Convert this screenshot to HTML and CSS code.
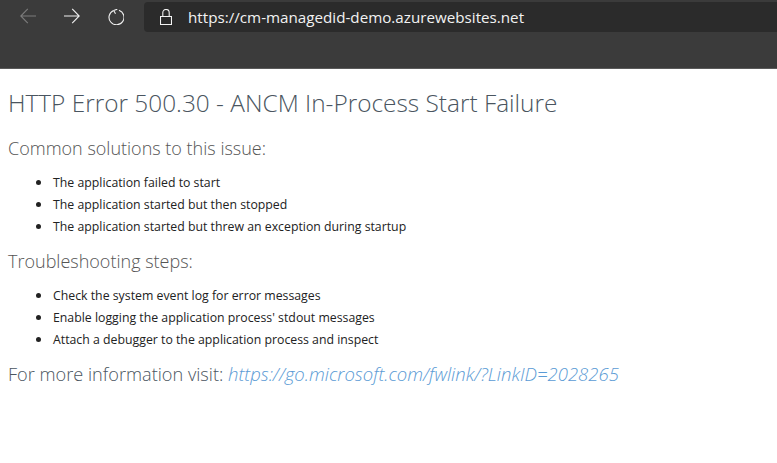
FILE: index.html
```html
<!DOCTYPE html>
<html lang="en">
<head>
<meta charset="utf-8">
<title>HTTP Error 500.30</title>
<link rel="stylesheet" href="styles.css">
</head>
<body>
<header class="toolbar">
  <div class="nav">
    <svg class="icon back" viewBox="0 0 16 16"><path d="M16 8H.8M7.800 .8L.8 8l7 7.200"/></svg>
    <svg class="icon" viewBox="0 0 16 16"><path d="M0 8h15.200M8.200 .8l7 7.200-7 7.200"/></svg>
    <svg class="icon reload" viewBox="0 0 16 16"><path d="M5.500 1.400A7.500 7.500 0 1 0 11 1.200M5.700 1.400L9.300 .2M5.700 1.400l1.800 3.300"/></svg>
  </div>
  <div class="address">
    <svg class="lock" viewBox="0 0 12 16"><path d="M.5 7.500h11v8H.5zM2.800 7.500V3.700a3.200 3.200 0 0 1 6.400 0v3.800"/></svg>
    <span class="url">https://cm-managedid-demo.azurewebsites.net</span>
  </div>
</header>
<main class="content">
  <h1>HTTP Error 500.30 - ANCM In-Process Start Failure</h1>
  <h2>Common solutions to this issue:</h2>
  <ul>
    <li>The application failed to start</li>
    <li>The application started but then stopped</li>
    <li>The application started but threw an exception during startup</li>
  </ul>
  <h2>Troubleshooting steps:</h2>
  <ul>
    <li>Check the system event log for error messages</li>
    <li>Enable logging the application process' stdout messages</li>
    <li>Attach a debugger to the application process and inspect</li>
  </ul>
  <h2 class="more">For more information visit: <a href="#">https://go.microsoft.com/fwlink/?LinkID=2028265</a></h2>
</main>
</body>
</html>
```
FILE: styles.css
```css
html, body { margin: 0; padding: 0; background: #fff; }
body { font-family: "Open Sans", "Noto Sans", sans-serif; overflow: hidden; }
.toolbar {
  height: 69px;
  box-sizing: border-box;
  background: #3b3b3b;
  border-bottom: 1px solid #5a5a5a;
  display: flex;
  align-items: flex-start;
  padding-top: 2px;
}
.nav { display: flex; gap: 28px; padding: 6px 0 0 20px; width: 144px; box-sizing: border-box; flex: none; }
.icon { width: 16px; height: 16px; fill: none; stroke: #f0f0f0; stroke-width: 1.1; flex: none; }
.icon.back { stroke: #7c7c7c; }
.icon.reload { margin-top: 1px; }
.address {
  flex: 1;
  height: 30px;
  background: #2b2b2b;
  border-radius: 4px 0 0 4px;
  display: flex;
  align-items: center;
  padding-left: 16px;
}
.lock { width: 12px; height: 16px; fill: none; stroke: #f4f4f4; stroke-width: 1.1; margin-right: 16px; flex: none; }
.url { color: #f2f2f2; font-size: 15.200px; }
.content { padding: 0 8px; }
h1 { font-size: 24.400px; font-weight: 300; color: #4a5560; line-height: 32px; margin: 18px 0 0; }
h2 { font-size: 18px; font-weight: 300; color: #555; line-height: 24px; margin: 0; }
h1 + h2 { margin-top: 17px; }
ul { margin: 10px 0 0; padding: 0 0 0 45px; }
ul + h2 { margin-top: 13px; }
li { font-size: 12.300px; line-height: 22px; height: 22px; color: #222; }
li::marker { font-size: 15px; }
.more { margin-top: 13px; color: #4a5560; font-size: 18.170px; }
a { color: #5b9bd5; font-style: italic; text-decoration: none; font-size: 18.500px; }
```
